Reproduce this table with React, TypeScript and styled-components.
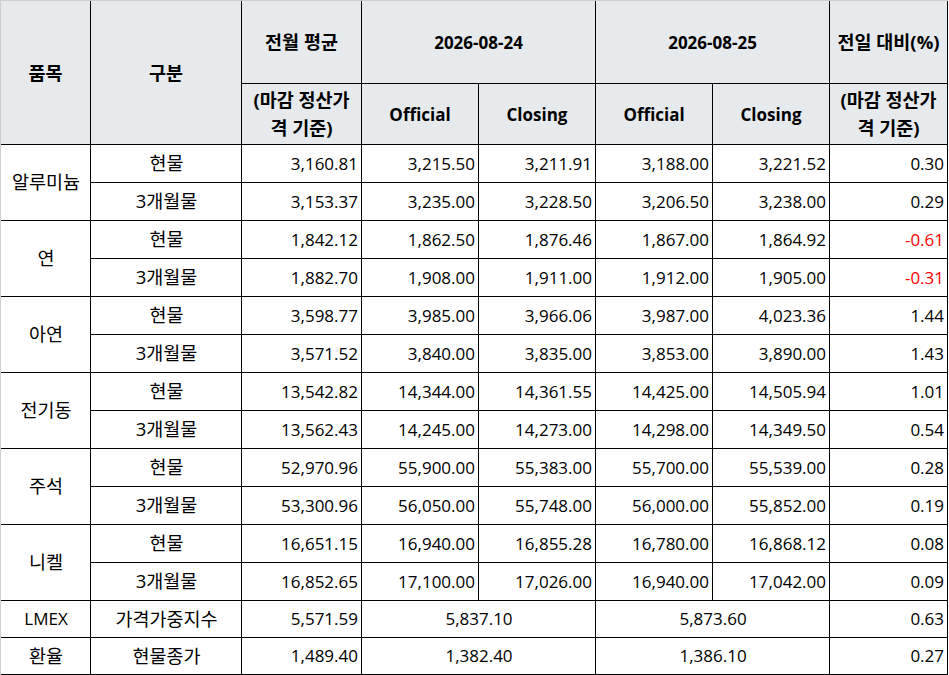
import React from 'react';
import styled, { createGlobalStyle } from 'styled-components';

const GlobalStyle = createGlobalStyle`
  html, body {
    margin: 0;
    padding: 0;
    background: #ffffff;
  }
  body {
    font-family: "Open Sans", "Noto Sans CJK KR", sans-serif;
    color: #000000;
  }
`;

const Table = styled.table`
  border-collapse: separate;
  border-spacing: 0;
  table-layout: fixed;
  width: 948px;
  border-left: 1px solid #cfcfcf;
  border-top: 1px solid #cfcfcf;
  font-size: 17px;
`;

const HeadRow = styled.tr<{ $height: number }>`
  height: ${props => props.$height}px;
`;

const HeadCell = styled.th`
  background: #e7eaed;
  border-right: 1px solid #000;
  border-bottom: 1px solid #000;
  font-weight: 700;
  line-height: 27px;
  padding: 0 4px;
  text-align: center;
  vertical-align: middle;
  white-space: nowrap;
`;

const BodyRow = styled.tr<{ $height: number }>`
  height: ${props => props.$height}px;
`;

const Cell = styled.td<{ $align?: 'left' | 'center' | 'right'; $negative?: boolean }>`
  border-right: 1px solid #000;
  border-bottom: 1px solid #000;
  padding: 0 3px 0 4px;
  text-align: ${props => props.$align ?? 'right'};
  color: ${props => (props.$negative ? '#ff0000' : '#000')};
  vertical-align: middle;
  white-space: nowrap;
  line-height: 22px;
`;

// hangul glyphs of the CJK font look small next to the latin ones, so bump them
const Ko = styled.span`
  font-size: 18.5px;
`;

interface Metal {
  name: string;
  rows: { kind: string; values: string[] }[];
}

const metals: Metal[] = [
  {
    name: '알루미늄',
    rows: [
      { kind: '현물', values: ['3,160.81', '3,215.50', '3,211.91', '3,188.00', '3,221.52', '0.30'] },
      { kind: '3개월물', values: ['3,153.37', '3,235.00', '3,228.50', '3,206.50', '3,238.00', '0.29'] },
    ],
  },
  {
    name: '연',
    rows: [
      { kind: '현물', values: ['1,842.12', '1,862.50', '1,876.46', '1,867.00', '1,864.92', '-0.61'] },
      { kind: '3개월물', values: ['1,882.70', '1,908.00', '1,911.00', '1,912.00', '1,905.00', '-0.31'] },
    ],
  },
  {
    name: '아연',
    rows: [
      { kind: '현물', values: ['3,598.77', '3,985.00', '3,966.06', '3,987.00', '4,023.36', '1.44'] },
      { kind: '3개월물', values: ['3,571.52', '3,840.00', '3,835.00', '3,853.00', '3,890.00', '1.43'] },
    ],
  },
  {
    name: '전기동',
    rows: [
      { kind: '현물', values: ['13,542.82', '14,344.00', '14,361.55', '14,425.00', '14,505.94', '1.01'] },
      { kind: '3개월물', values: ['13,562.43', '14,245.00', '14,273.00', '14,298.00', '14,349.50', '0.54'] },
    ],
  },
  {
    name: '주석',
    rows: [
      { kind: '현물', values: ['52,970.96', '55,900.00', '55,383.00', '55,700.00', '55,539.00', '0.28'] },
      { kind: '3개월물', values: ['53,300.96', '56,050.00', '55,748.00', '56,000.00', '55,852.00', '0.19'] },
    ],
  },
  {
    name: '니켈',
    rows: [
      { kind: '현물', values: ['16,651.15', '16,940.00', '16,855.28', '16,780.00', '16,868.12', '0.08'] },
      { kind: '3개월물', values: ['16,852.65', '17,100.00', '17,026.00', '16,940.00', '17,042.00', '0.09'] },
    ],
  },
];

const singles = [
  { name: 'LMEX', kind: '가격가중지수', avg: '5,571.59', d1: '5,837.10', d2: '5,873.60', change: '0.63' },
  { name: '환율', kind: '현물종가', avg: '1,489.40', d1: '1,382.40', d2: '1,386.10', change: '0.27' },
];

const colWidths = [90, 151, 120, 117, 117, 117, 117, 118];

const isLatin = (s: string) => /^[A-Za-z0-9 .,-]+$/.test(s);

const Label: React.FC<{ text: string }> = ({ text }) =>
  isLatin(text) ? <>{text}</> : <Ko>{text}</Ko>;

const BasisNote = () => (
  <Ko>
    (마감 정산가
    <br />
    격 기준)
  </Ko>
);

const App: React.FC = () => {
  return (
    <>
      <GlobalStyle />
      <Table>
        <colgroup>
          {colWidths.map((w, i) => (
            <col key={i} style={{ width: w }} />
          ))}
        </colgroup>
        <thead>
          <HeadRow $height={83}>
            <HeadCell rowSpan={2}>
              <Ko>품목</Ko>
            </HeadCell>
            <HeadCell rowSpan={2}>
              <Ko>구분</Ko>
            </HeadCell>
            <HeadCell>
              <Ko>전월 평균</Ko>
            </HeadCell>
            <HeadCell colSpan={2}>2026-08-24</HeadCell>
            <HeadCell colSpan={2}>2026-08-25</HeadCell>
            <HeadCell>
              <Ko>전일 대비(%)</Ko>
            </HeadCell>
          </HeadRow>
          <HeadRow $height={61}>
            <HeadCell>
              <BasisNote />
            </HeadCell>
            <HeadCell>Official</HeadCell>
            <HeadCell>Closing</HeadCell>
            <HeadCell>Official</HeadCell>
            <HeadCell>Closing</HeadCell>
            <HeadCell>
              <BasisNote />
            </HeadCell>
          </HeadRow>
        </thead>
        <tbody>
          {metals.map(metal =>
            metal.rows.map((row, i) => (
              <BodyRow key={metal.name + row.kind} $height={38}>
                {i === 0 && (
                  <Cell rowSpan={2} $align="center">
                    <Label text={metal.name} />
                  </Cell>
                )}
                <Cell $align="center">
                  <Label text={row.kind} />
                </Cell>
                {row.values.map((v, j) => (
                  <Cell key={j} $negative={v.startsWith('-')}>
                    {v}
                  </Cell>
                ))}
              </BodyRow>
            ))
          )}
          {singles.map(s => (
            <BodyRow key={s.name} $height={37}>
              <Cell $align="center">
                <Label text={s.name} />
              </Cell>
              <Cell $align="center">
                <Label text={s.kind} />
              </Cell>
              <Cell>{s.avg}</Cell>
              <Cell colSpan={2} $align="center">
                {s.d1}
              </Cell>
              <Cell colSpan={2} $align="center">
                {s.d2}
              </Cell>
              <Cell>{s.change}</Cell>
            </BodyRow>
          ))}
        </tbody>
      </Table>
    </>
  );
};

export default App;
